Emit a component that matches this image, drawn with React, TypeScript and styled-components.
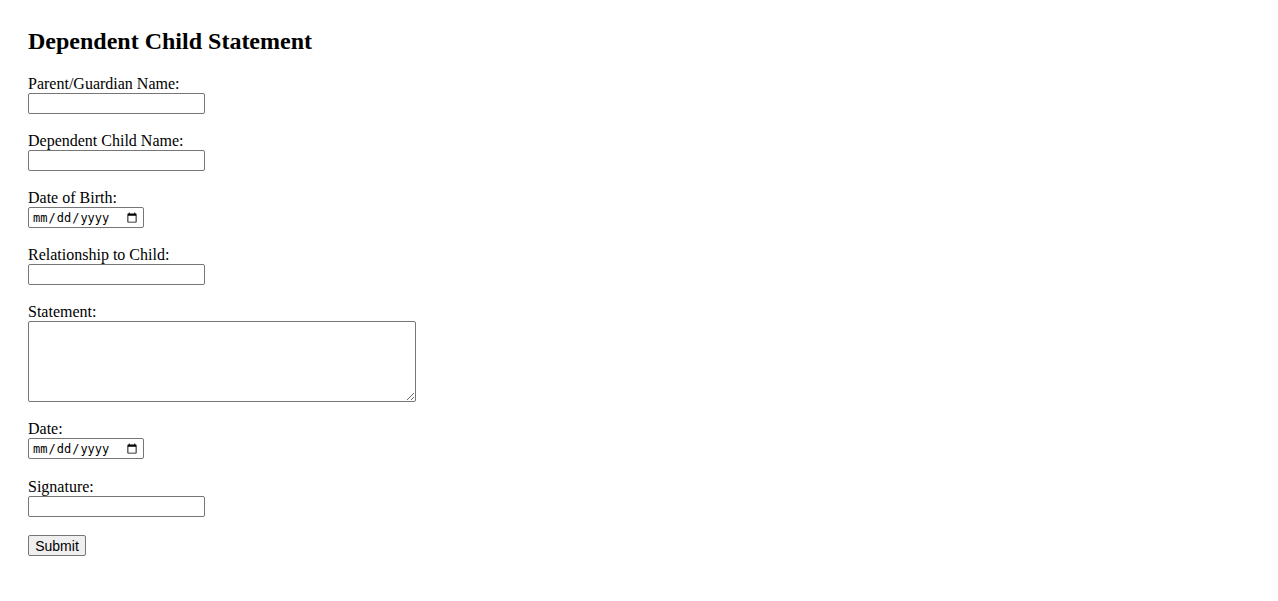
import React from 'react';
import styled, { createGlobalStyle } from 'styled-components';

const GlobalStyle = createGlobalStyle`
  body {
    margin: 8px;
    background: #fff;
    color: #000;
    font-family: "Liberation Serif", "Times New Roman", serif;
    font-size: 16px;
  }
`;

const Page = styled.div`
  margin: 20px;
`;

const Title = styled.h2`
  margin: 0 0 20px;
  font-size: 24px;
  line-height: 27px;
  font-weight: bold;
`;

const Form = styled.form`
  display: flex;
  flex-direction: column;
  align-items: flex-start;
`;

const Field = styled.div<{ $gap?: number }>`
  display: flex;
  flex-direction: column;
  align-items: flex-start;
  margin-bottom: ${({ $gap }) => $gap ?? 18}px;
`;

const Label = styled.label`
  display: block;
  line-height: 18px;
  height: 18px;
`;

const TextInput = styled.input<{ $w?: number }>`
  box-sizing: border-box;
  width: ${({ $w }) => $w ?? 177}px;
  height: 21px;
  margin: 0;
  padding: 1px 2px;
  border: 1px solid #767676;
  border-radius: 2px;
  background: #fff;
  font-family: "Liberation Sans", Arial, sans-serif;
  font-size: 13.33px;
`;

const DateInput = styled(TextInput)`
  font-family: "DejaVu Sans Mono", "Liberation Mono", monospace;
  font-size: 12px;
  color: #000;
  padding: 0 3px;
`;

const Area = styled.textarea`
  box-sizing: border-box;
  width: 388px;
  height: 81px;
  margin: 0;
  padding: 2px;
  border: 1px solid #767676;
  border-radius: 2px;
  font-family: "Liberation Mono", monospace;
  font-size: 13.33px;
`;

const SubmitButton = styled.button`
  box-sizing: border-box;
  height: 21px;
  width: 58px;
  padding: 1px 6px;
  margin: 0;
  border: 1px solid #767676;
  border-radius: 2px;
  background: #efefef;
  color: #000;
  font-family: "Liberation Sans", Arial, sans-serif;
  font-size: 14px;
`;

const fields: { id: string; label: string; kind: 'text' | 'date' | 'area'; gap?: number }[] = [
  { id: 'parent', label: 'Parent/Guardian Name:', kind: 'text' },
  { id: 'child', label: 'Dependent Child Name:', kind: 'text' },
  { id: 'dob', label: 'Date of Birth:', kind: 'date' },
  { id: 'relationship', label: 'Relationship to Child:', kind: 'text' },
  { id: 'statement', label: 'Statement:', kind: 'area' },
  { id: 'date', label: 'Date:', kind: 'date', gap: 19 },
  { id: 'signature', label: 'Signature:', kind: 'text' },
];

export default function App() {
  return (
    <>
      <GlobalStyle />
      <Page>
        <Title>Dependent Child Statement</Title>
        <Form onSubmit={(e) => e.preventDefault()}>
          {fields.map((f) => (
            <Field key={f.id} $gap={f.gap}>
              <Label htmlFor={f.id}>{f.label}</Label>
              {f.kind === 'text' && <TextInput id={f.id} type="text" />}
              {f.kind === 'date' && <DateInput id={f.id} type="date" $w={116} />}
              {f.kind === 'area' && <Area id={f.id} />}
            </Field>
          ))}
          <SubmitButton type="submit">Submit</SubmitButton>
        </Form>
      </Page>
    </>
  );
}
